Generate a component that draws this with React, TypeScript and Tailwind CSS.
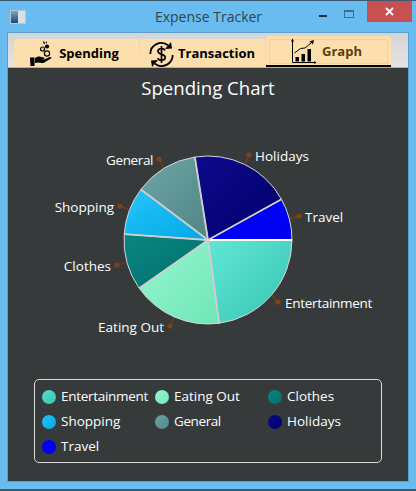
import React from 'react';

const FONT = "font-['Open_Sans','Noto_Sans',sans-serif]";

const CX = 208;
const CY = 240;
const R = 84;

const slices = [
  { name: 'Entertainment', from: 0, to: 82.4, c1: '#62e6d6', c2: '#36c4b2', grad: 'ent', label: [285, 308], anchor: 'start', dot: [278, 302], edge: [271, 295], track: -0.3 },
  { name: 'Eating Out', from: 82.4, to: 145, c1: '#98f5cf', c2: '#6fe6b8', grad: 'eat', label: [164, 332], anchor: 'end', dot: [170, 326], edge: [174, 317], track: 0 },
  { name: 'Clothes', from: 145, to: 184, c1: '#0a8682', c2: '#006f6b', grad: 'clo', label: [111, 271], anchor: 'end', dot: [117, 265], edge: [125, 263], track: 0 },
  { name: 'Shopping', from: 184, to: 217, c1: '#27c4fb', c2: '#00a8e6', grad: 'sho', label: [114, 212], anchor: 'end', dot: [120, 206], edge: [128, 209], track: 0 },
  { name: 'General', from: 217, to: 261, c1: '#6fa5a5', c2: '#4f8585', grad: 'gen', label: [153, 165], anchor: 'end', dot: [159, 159], edge: [164, 168], track: -0.4 },
  { name: 'Holidays', from: 261, to: 331, c1: '#0e0a8c', c2: '#00006a', grad: 'hol', label: [255, 161], anchor: 'start', dot: [249, 155], edge: [245, 164], track: 0 },
  { name: 'Travel', from: 331, to: 360, c1: '#0000ff', c2: '#0000ee', grad: 'tra', label: [305, 222], anchor: 'start', dot: [299, 216], edge: [290, 219], track: 0 },
];

const legend = [
  { name: 'Entertainment', cls: 'bg-gradient-to-br from-[#55dccb] to-[#38c6b4]', text: 'tracking-[-0.3px]' },
  { name: 'Eating Out', cls: 'bg-gradient-to-br from-[#94f3cd] to-[#74e8bb]', text: '' },
  { name: 'Clothes', cls: 'bg-gradient-to-br from-[#0a8380] to-[#00716d]', text: '' },
  { name: 'Shopping', cls: 'bg-gradient-to-br from-[#22c1f9] to-[#02aae8]', text: '' },
  { name: 'General', cls: 'bg-gradient-to-br from-[#6ca2a2] to-[#528888]', text: 'tracking-[-0.4px]' },
  { name: 'Holidays', cls: 'bg-gradient-to-br from-[#0c0a8a] to-[#00006c]', text: '' },
  { name: 'Travel', cls: 'bg-[#0000f6]', text: '' },
];

function point(deg: number, r = R) {
  const a = (deg * Math.PI) / 180;
  return [CX + r * Math.cos(a), CY + r * Math.sin(a)];
}

function slicePath(from: number, to: number) {
  const [x1, y1] = point(from);
  const [x2, y2] = point(to);
  const large = to - from > 180 ? 1 : 0;
  return `M${CX} ${CY} L${x1} ${y1} A${R} ${R} 0 ${large} 1 ${x2} ${y2} Z`;
}

function PieChart() {
  return (
    <svg width="400" height="270" viewBox="8 110 400 270" className="block shrink-0">
      <defs>
        {slices.map((s) => (
          <linearGradient key={s.grad} id={s.grad} x1="0" y1="0" x2="1" y2="1">
            <stop offset="0" stopColor={s.c1} />
            <stop offset="1" stopColor={s.c2} />
          </linearGradient>
        ))}
      </defs>
      {slices.map((s) => (
        <path key={s.name} d={`M${s.edge[0]} ${s.edge[1]} L${s.dot[0]} ${s.dot[1]}`} stroke="#7b3f14" strokeWidth="1.2" />
      ))}
      {slices.map((s) => (
        <circle key={s.name} cx={s.dot[0]} cy={s.dot[1]} r="2.6" fill="#84410f" />
      ))}
      {slices.map((s) => (
        <path key={s.name} d={slicePath(s.from, s.to)} fill={`url(#${s.grad})`} stroke="#d6d6d6" strokeWidth="1" />
      ))}
      {slices.map((s) => (
        <path key={s.name} d={`M${CX} ${CY} L${point(s.from)[0]} ${point(s.from)[1]}`} stroke={s.from === 0 ? '#ffffff' : '#cfcfcf'} strokeWidth="1.8" />
      ))}
      {slices.map((s) => (
        <text
          key={s.name}
          x={s.label[0]}
          y={s.label[1]}
          textAnchor={s.anchor as 'start' | 'end'}
          fill="#ffffff"
          fontSize="13.5"
          letterSpacing={s.track}
        >
          {s.name}
        </text>
      ))}
    </svg>
  );
}

function SpendingIcon() {
  return (
    <svg width="26" height="26" viewBox="0 0 26 26" className="shrink-0">
      <path d="M0 16.5h4.500v8.500H.5z" fill="#000" />
      <path d="M5 17c2-1.600 4-2 5.500-1.200l3 .6c1.200.2 1.200 1.600 0 1.800l-2.500.2 3 .1 6-2.400c1.300-.4 1.900.7.900 1.500l-6.500 4c-1 .6-2 .7-3 .5l-3-.6-3.400.6z" fill="#000" />
      <circle cx="17" cy="12.500" r="2.600" fill="none" stroke="#000" strokeWidth="1.200" />
      <circle cx="12.500" cy="8" r="2" fill="none" stroke="#000" strokeWidth="1.200" />
      <circle cx="17" cy="5.500" r="2.100" fill="#000" />
      <path d="M13.500.5l1 2.500M16 .8l.6 1.500" stroke="#000" strokeWidth="1.200" fill="none" />
    </svg>
  );
}

function TransactionIcon() {
  return (
    <svg width="27" height="27" viewBox="0 0 27 27" className="shrink-0">
      <path d="M2.300 13A11 11 0 0 1 20 4.300" fill="none" stroke="#000" strokeWidth="1.800" />
      <path d="M24.700 14A11 11 0 0 1 7 22.700" fill="none" stroke="#000" strokeWidth="1.800" />
      <path d="M17 8l7-.5-1-6.500z" fill="#000" />
      <path d="M10 19l-7 .5 1 6.500z" fill="#000" />
      <path d="M17 9.500c-.6-1.300-1.900-2-3.500-2-2 0-3.500 1-3.500 2.800 0 3.900 7.200 2.200 7.200 6 0 1.900-1.600 3-3.700 3-1.800 0-3.200-.8-3.800-2.200M13.500 5v17" fill="none" stroke="#000" strokeWidth="1.700" />
    </svg>
  );
}

function GraphIcon() {
  return (
    <svg width="26" height="27" viewBox="0 0 26 27" className="shrink-0">
      <path d="M1.500 1V24.500H25" fill="none" stroke="#000" strokeWidth="1" />
      <path d="M0 3.500L1.500.5l1.500 3zM23 23l2.500 1.500L23 26z" fill="#000" />
      <path d="M4.500 19h3.500v4.500H4.500zM10.500 16h3.500v7.500h-3.500zM16.500 11h3.500v12.500h-3.500z" fill="#000" />
      <path d="M3.500 15l6-4.500 4.500-.5 6-5" fill="none" stroke="#000" strokeWidth="1" />
      <path d="M18.500 3.500L23 2l-1 4.500z" fill="#000" />
    </svg>
  );
}

export default function App() {
  return (
    <div className={`w-[416px] h-[491px] overflow-hidden flex flex-col bg-[#69bcf0] border-t border-b-2 border-t-[#3c5a70] border-b-[#3c5a70] ${FONT}`}>
      <div className="h-[31px] shrink-0 flex items-start">
        <div className="ml-[10px] mt-[9px] w-[16px] h-[14px] bg-[#d9dfe3] border border-[#b8c6d0] flex">
          <div className="w-[7px] bg-gradient-to-b from-[#77aabb] to-[#224477]" />
        </div>
        <div className="flex-1 text-center text-[14px] text-[#2f4450] mt-[5px] pl-[72px]">Expense Tracker</div>
        <div className="w-[8px] h-[2px] bg-[#1f2f3a] mt-[14px] mr-[17px]" />
        <div className="w-[10px] h-[8px] border border-[#3d6f92] border-t-2 mt-[9px] mr-[13px]" />
        <div className="w-[45px] h-[21px] bg-[#c75050] text-white flex items-center justify-center mr-[4px]">
          <svg width="9" height="9" viewBox="0 0 9 9">
            <path d="M1 1l7 7M8 1l-7 7" stroke="#fff" strokeWidth="1.800" />
          </svg>
        </div>
      </div>

      <div className="flex-1 mx-[7px] mb-[7px] border border-[#5a9fd0] flex flex-col min-h-0">
        <div className="h-[35px] shrink-0 bg-gradient-to-b from-[#d4d4d4] to-[#e4e4e4] flex items-end pl-[6px] gap-[1px] border-b border-b-[#b0b0b0]">
          <div className="w-[125px] h-[28px] pt-[2px] pr-[4px] bg-[#fddfae] rounded-t-[4px] flex items-center justify-center gap-[3px] text-[13px] font-bold text-black">
            <SpendingIcon />
            <span>Spending</span>
          </div>
          <div className="w-[125px] h-[28px] pt-[2px] pr-[2px] bg-[#fddfae] rounded-t-[4px] flex items-center justify-center gap-[3px] text-[13px] font-bold text-black">
            <TransactionIcon />
            <span>Transaction</span>
          </div>
          <div className="w-[125px] h-[31px] bg-[#fddfae] rounded-t-[4px] border-b-2 border-b-black p-[3px] pb-[1px]">
            <div className="h-full pr-[4px] border border-[#e3d5a8] flex items-center justify-center gap-[5px] text-[13px] font-bold text-[#5a3d12]">
              <GraphIcon />
              <span>Graph</span>
            </div>
          </div>
        </div>

        <div className="flex-1 bg-[#363a3b] flex flex-col items-center min-h-0">
          <div className="text-[18.6px] leading-[25px] text-white mt-[7px]">Spending Chart</div>
          <div className="mt-[10px]">
            <PieChart />
          </div>
          <div className="w-[348px] h-[84px] -mt-[1px] border border-[#d8d8d8] rounded-[5px] px-[7px] py-[4px] grid grid-cols-[113px_113px_113px] auto-rows-[25px]">
            {legend.map((l) => (
              <div key={l.name} className={`flex items-center gap-[5px] text-[13.5px] text-white whitespace-nowrap ${l.text}`}>
                <span className={`w-[14px] h-[14px] rounded-full shrink-0 ${l.cls}`} />
                {l.name}
              </div>
            ))}
          </div>
        </div>
      </div>
    </div>
  );
}
